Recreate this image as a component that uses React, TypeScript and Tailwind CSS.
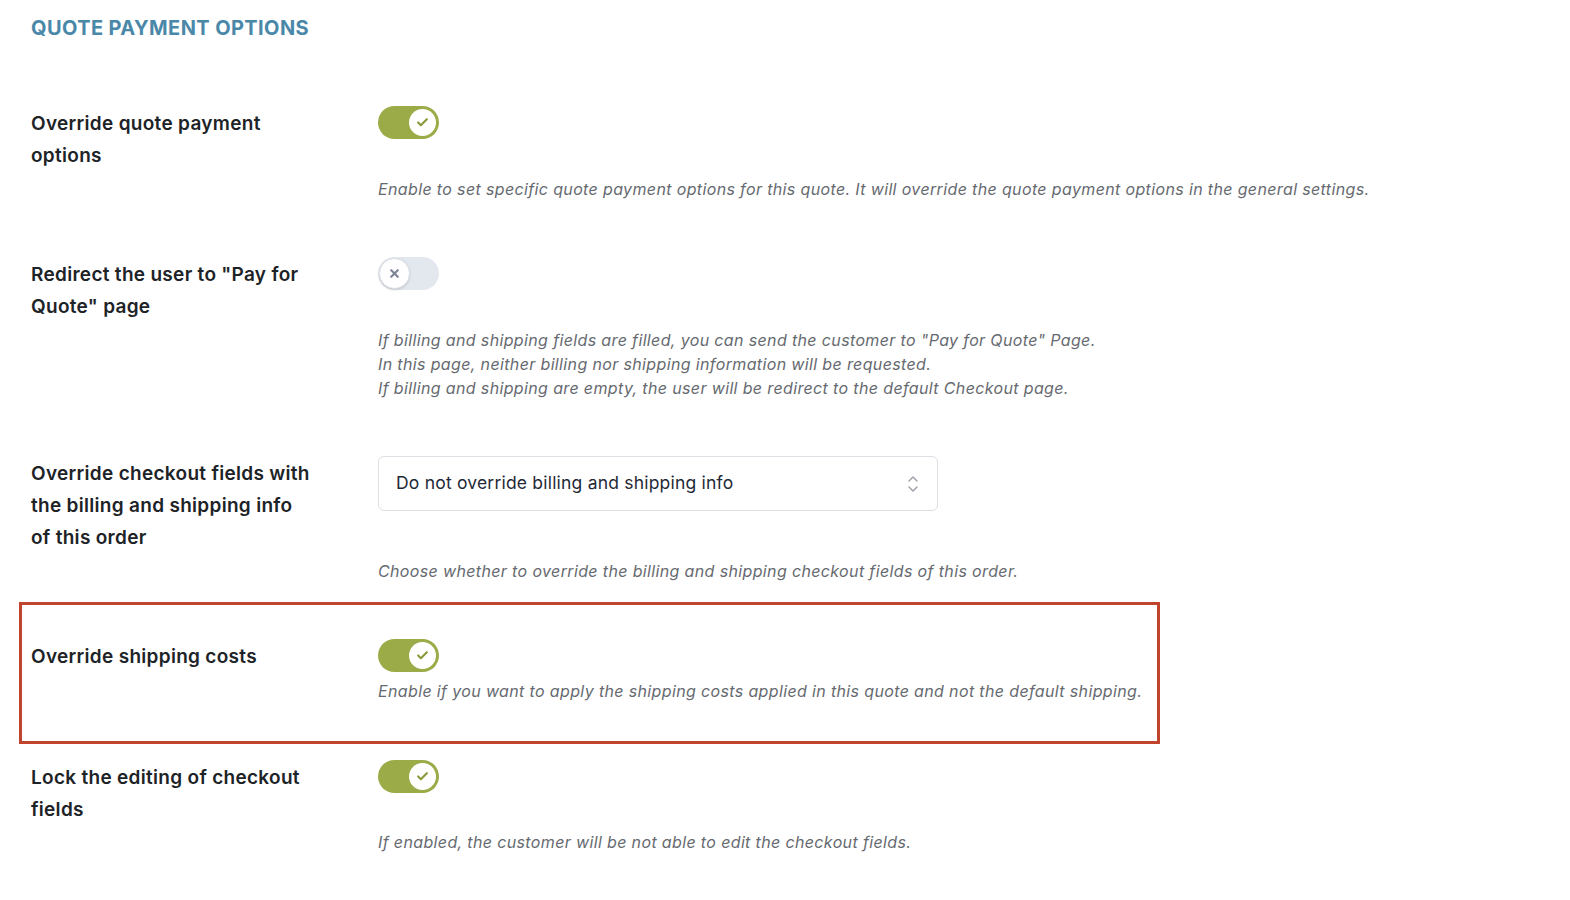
import { Check, X } from 'lucide-react';

function Toggle({ on }: { on: boolean }) {
  return (
    <div
      className={
        on
          ? 'w-[61px] h-[33px] rounded-full bg-[#9aab47] flex items-center justify-end px-[3px]'
          : 'w-[61px] h-[33px] rounded-full bg-[#e3e7ee] flex items-center justify-start px-[1px]'
      }
    >
      <div
        className={
          on
            ? 'w-[27px] h-[27px] rounded-full bg-white flex items-center justify-center'
            : 'w-[31px] h-[31px] rounded-full bg-white border border-[#dde1e7] shadow-sm flex items-center justify-center'
        }
      >
        {on ? (
          <Check className="w-[13px] h-[13px] text-[#8a9c3a]" strokeWidth={4} />
        ) : (
          <X className="w-[13px] h-[13px] text-[#7b8396]" strokeWidth={4} />
        )}
      </div>
    </div>
  );
}

function Label({ children }: { children: React.ReactNode }) {
  return (
    <div className="w-[347px] shrink-0 pr-[40px] pt-[2px]">
      <div className="text-[19px] leading-[32px] font-semibold tracking-[0.3px] text-[#1d2327] max-w-[281px]">{children}</div>
    </div>
  );
}

function Desc({ children, className = '' }: { children: React.ReactNode; className?: string }) {
  return <div className={`text-[16px] leading-[24px] italic tracking-[0.36px] text-[#666a70] ${className}`}>{children}</div>;
}

export default function App() {
  return (
    <div className="min-h-screen bg-white px-[31px] pt-[14px] pb-10" style={{ fontFamily: 'Inter, "Noto Sans", sans-serif' }}>
      <h2 className="text-[20px] leading-[28px] font-bold uppercase text-[#4a88a9] tracking-[0.4px]">Quote payment options</h2>

      {/* Override quote payment options */}
      <div className="flex pt-[64px] pb-[28px]">
        <Label>Override quote payment options</Label>
        <div>
          <Toggle on />
          <Desc className="mt-[38px]">
            Enable to set specific quote payment options for this quote. It will override the quote payment options in the general settings.
          </Desc>
        </div>
      </div>

      {/* Redirect to pay for quote */}
      <div className="flex pt-[28px] pb-[28px]">
        <Label>Redirect the user to "Pay for Quote" page</Label>
        <div>
          <Toggle on={false} />
          <Desc className="mt-[38px]">
            <div>If billing and shipping fields are filled, you can send the customer to "Pay for Quote" Page.</div>
            <div>In this page, neither billing nor shipping information will be requested.</div>
            <div>If billing and shipping are empty, the user will be redirect to the default Checkout page.</div>
          </Desc>
        </div>
      </div>

      {/* Override checkout fields */}
      <div className="flex pt-[28px] pb-[19px]">
        <Label>Override checkout fields with the billing and shipping info of this order</Label>
        <div>
          <div className="w-[560px] h-[55px] rounded-[6px] border border-[#dcdfe4] bg-white flex items-center justify-between pl-[17px] pr-[18px]">
            <span className="text-[17.5px] tracking-[0.2px] text-[#1f2937]">Do not override billing and shipping info</span>
            <svg width="12" height="20" viewBox="0 0 12 20" fill="none" stroke="#9a9ea6" strokeWidth="1.4" strokeLinecap="round" strokeLinejoin="round">
              <path d="M2 7l4-4 4 4" />
              <path d="M2 13l4 4 4-4" />
            </svg>
          </div>
          <Desc className="mt-[48px]">Choose whether to override the billing and shipping checkout fields of this order.</Desc>
        </div>
      </div>

      {/* Override shipping costs (highlighted) */}
      <div className="-ml-[12px] w-[1141px] border-[3px] border-[#c0432c] pl-[9px] pt-[34px] pb-[38px] flex">
        <Label>Override shipping costs</Label>
        <div>
          <Toggle on />
          <Desc className="mt-[7px]">
            Enable if you want to apply the shipping costs applied in this quote and not the default shipping.
          </Desc>
        </div>
      </div>

      {/* Lock editing */}
      <div className="flex pt-[16px] pb-[28px]">
        <Label>Lock the editing of checkout fields</Label>
        <div>
          <Toggle on />
          <Desc className="mt-[37px]">If enabled, the customer will be not able to edit the checkout fields.</Desc>
        </div>
      </div>
    </div>
  );
}
